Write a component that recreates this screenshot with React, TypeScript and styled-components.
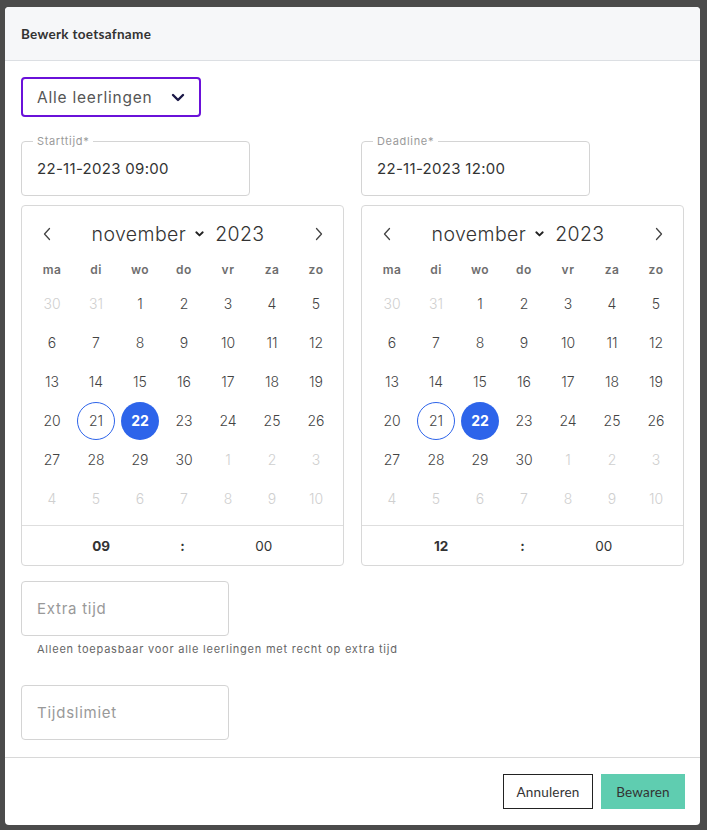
import React from "react";
import styled, { createGlobalStyle, css } from "styled-components";

const GlobalStyle = createGlobalStyle`
  html, body { margin: 0; padding: 0; }
  body {
    background: #4b4b4b;
    font-family: "Inter", "Open Sans", sans-serif;
    color: #333;
  }
`;

const Page = styled.div`
  width: 707px;
  height: 830px;
  box-sizing: border-box;
  padding: 7px 0 0 5px;
  overflow: hidden;
`;

const Modal = styled.div`
  width: 695px;
  height: 818px;
  background: #fff;
  border-radius: 4px;
  overflow: hidden;
  display: flex;
  flex-direction: column;
`;

const Header = styled.div`
  height: 53px;
  background: #f6f7f9;
  border-bottom: 1px solid #dcdfe3;
  display: flex;
  align-items: center;
  padding: 0 16px;
`;

const Title = styled.h2`
  margin: 0;
  font-family: "Lato", sans-serif;
  font-weight: 700;
  font-size: 13.5px;
  color: #333;
  letter-spacing: 0.3px;
`;

const Body = styled.div`
  flex: 1;
  padding: 16px 16px 0;
  display: flex;
  flex-direction: column;
`;

const SelectBox = styled.div`
  width: 180px;
  height: 40px;
  box-sizing: border-box;
  border: 2px solid #6a11d9;
  border-radius: 4px;
  display: flex;
  align-items: center;
  padding: 0 14px;
  gap: 18px;
  font-size: 15.5px;
  letter-spacing: 0.05em;
  color: #555;
`;

const Columns = styled.div`
  display: grid;
  grid-template-columns: 323px 323px;
  column-gap: 17px;
  margin-top: 24px;
`;

const Column = styled.div`
  display: flex;
  flex-direction: column;
  gap: 9px;
`;

const Field = styled.div<{ $width?: number }>`
  position: relative;
  width: ${(p) => p.$width ?? 229}px;
  height: 55px;
  box-sizing: border-box;
  border: 1px solid #d4d4d4;
  border-radius: 4px;
  display: flex;
  align-items: center;
  padding: 0 15px;
`;

const FieldLabel = styled.span`
  position: absolute;
  top: -8px;
  left: 11px;
  padding: 0 4px;
  background: #fff;
  font-size: 11px;
  letter-spacing: 0.06em;
  color: #9a9a9a;
  line-height: 14px;
`;

const FieldValue = styled.span<{ $placeholder?: boolean }>`
  font-size: 15px;
  letter-spacing: ${(p) => (p.$placeholder ? "0.05em" : "0.02em")};
  color: ${(p) => (p.$placeholder ? "#999" : "#333")};
`;

const Calendar = styled.div`
  border: 1px solid #d8d8d8;
  border-radius: 4px;
  display: flex;
  flex-direction: column;
`;

const Nav = styled.div`
  height: 40px;
  margin-top: 8px;
  display: flex;
  align-items: center;
  padding: 0 19px 0 20px;
`;

const NavButton = styled.span`
  width: 10px;
  display: flex;
  justify-content: center;
`;

const NavCenter = styled.div`
  flex: 1;
  display: flex;
  align-items: center;
  justify-content: center;
  font-size: 19.5px;
  font-weight: 300;
  letter-spacing: 0.02em;
  color: #333;
  padding-right: 10px;
`;

const MonthSelect = styled.span`
  display: flex;
  align-items: center;
  gap: 9px;
  margin-right: 11px;
`;

const Grid = styled.div`
  display: grid;
  grid-template-columns: repeat(7, 44px);
  padding: 0 8px 7px;
`;

const Weekday = styled.span`
  height: 30px;
  display: flex;
  align-items: center;
  justify-content: center;
  font-size: 12px;
  font-weight: 600;
  letter-spacing: 0.04em;
  color: #6e6e6e;
`;

const DayCell = styled.span`
  height: 39px;
  display: flex;
  align-items: center;
  justify-content: center;
`;

const Day = styled.span<{ $muted?: boolean; $today?: boolean; $selected?: boolean }>`
  width: 38px;
  height: 38px;
  box-sizing: border-box;
  border-radius: 50%;
  display: flex;
  align-items: center;
  justify-content: center;
  font-size: 14px;
  font-weight: 300;
  color: ${(p) => (p.$muted ? "#cfcfcf" : "#444")};
  ${(p) =>
    p.$today &&
    css`
      border: 1px solid #2d64ea;
    `}
  ${(p) =>
    p.$selected &&
    css`
      background: #2d64ea;
      color: #fff;
      font-weight: 700;
    `}
`;

const TimeRow = styled.div`
  height: 39px;
  border-top: 1px solid #dedede;
  display: grid;
  grid-template-columns: 1fr auto 1fr;
  align-items: center;
  font-size: 13.5px;
  color: #333;
`;

const TimePart = styled.span<{ $bold?: boolean }>`
  text-align: center;
  font-weight: ${(p) => (p.$bold ? 700 : 400)};
`;

const Colon = styled.span`
  font-weight: 700;
`;

const Hint = styled.p`
  margin: 6px 0 0 16px;
  font-size: 11px;
  letter-spacing: 0.07em;
  color: #666;
  line-height: 14px;
`;

const Stack = styled.div`
  display: flex;
  flex-direction: column;
  margin-top: 15px;
`;

const SecondField = styled.div`
  margin-top: 29px;
`;

const Footer = styled.div`
  height: 68px;
  box-sizing: border-box;
  border-top: 1px solid #d8d8d8;
  display: flex;
  justify-content: flex-end;
  align-items: flex-start;
  gap: 8px;
  padding: 16px 15px 0;
`;

const Button = styled.button<{ $primary?: boolean }>`
  height: 35px;
  box-sizing: border-box;
  font-family: "Lato", sans-serif;
  font-size: 13.5px;
  letter-spacing: 0.2px;
  color: #333;
  cursor: pointer;
  ${(p) =>
    p.$primary
      ? css`
          width: 84px;
          background: #5fcdb0;
          border: none;
        `
      : css`
          width: 90px;
          background: #fff;
          border: 1px solid #222;
        `}
`;

const ChevronDown = () => (
  <svg width="14" height="9" viewBox="0 0 14 9">
    <path d="M2 2 L7 7 L12 2" fill="none" stroke="#1b1847" strokeWidth="2.4" strokeLinecap="round" strokeLinejoin="round" />
  </svg>
);

const SmallChevron = () => (
  <svg width="9" height="6" viewBox="0 0 9 6">
    <path d="M1.3 1.3 L4.5 4.4 L7.7 1.3" fill="none" stroke="#222" strokeWidth="1.9" strokeLinecap="round" strokeLinejoin="round" />
  </svg>
);

const Arrow = ({ dir }: { dir: "left" | "right" }) => (
  <svg width="8" height="14" viewBox="0 0 8 14">
    <path
      d={dir === "left" ? "M6.5 1.5 L1.5 7 L6.5 12.5" : "M1.5 1.5 L6.5 7 L1.5 12.5"}
      fill="none"
      stroke="#444"
      strokeWidth="1.3"
      strokeLinecap="round"
      strokeLinejoin="round"
    />
  </svg>
);

const weekdays = ["ma", "di", "wo", "do", "vr", "za", "zo"];

type DayInfo = { n: number; muted?: boolean };
const days: DayInfo[] = [
  { n: 30, muted: true },
  { n: 31, muted: true },
  ...Array.from({ length: 30 }, (_, i) => ({ n: i + 1 })),
  ...Array.from({ length: 10 }, (_, i) => ({ n: i + 1, muted: true })),
];

const CalendarPanel = ({ hour }: { hour: string }) => (
  <Calendar>
    <Nav>
      <NavButton>
        <Arrow dir="left" />
      </NavButton>
      <NavCenter>
        <MonthSelect>
          november
          <SmallChevron />
        </MonthSelect>
        2023
      </NavCenter>
      <NavButton>
        <Arrow dir="right" />
      </NavButton>
    </Nav>
    <Grid>
      {weekdays.map((w) => (
        <Weekday key={w}>{w}</Weekday>
      ))}
      {days.map((d, i) => (
        <DayCell key={i}>
          <Day $muted={d.muted} $today={!d.muted && d.n === 21} $selected={!d.muted && d.n === 22}>
            {d.n}
          </Day>
        </DayCell>
      ))}
    </Grid>
    <TimeRow>
      <TimePart $bold>{hour}</TimePart>
      <Colon>:</Colon>
      <TimePart>00</TimePart>
    </TimeRow>
  </Calendar>
);

export default function App() {
  return (
    <>
      <GlobalStyle />
      <Page>
        <Modal>
          <Header>
            <Title>Bewerk toetsafname</Title>
          </Header>
          <Body>
            <SelectBox>
              Alle leerlingen
              <ChevronDown />
            </SelectBox>
            <Columns>
              <Column>
                <Field>
                  <FieldLabel>Starttijd*</FieldLabel>
                  <FieldValue>22-11-2023 09:00</FieldValue>
                </Field>
                <CalendarPanel hour="09" />
              </Column>
              <Column>
                <Field>
                  <FieldLabel>Deadline*</FieldLabel>
                  <FieldValue>22-11-2023 12:00</FieldValue>
                </Field>
                <CalendarPanel hour="12" />
              </Column>
            </Columns>
            <Stack>
              <Field $width={208}>
                <FieldValue $placeholder>Extra tijd</FieldValue>
              </Field>
              <Hint>Alleen toepasbaar voor alle leerlingen met recht op extra tijd</Hint>
              <SecondField>
                <Field $width={208}>
                  <FieldValue $placeholder>Tijdslimiet</FieldValue>
                </Field>
              </SecondField>
            </Stack>
          </Body>
          <Footer>
            <Button>Annuleren</Button>
            <Button $primary>Bewaren</Button>
          </Footer>
        </Modal>
      </Page>
    </>
  );
}
